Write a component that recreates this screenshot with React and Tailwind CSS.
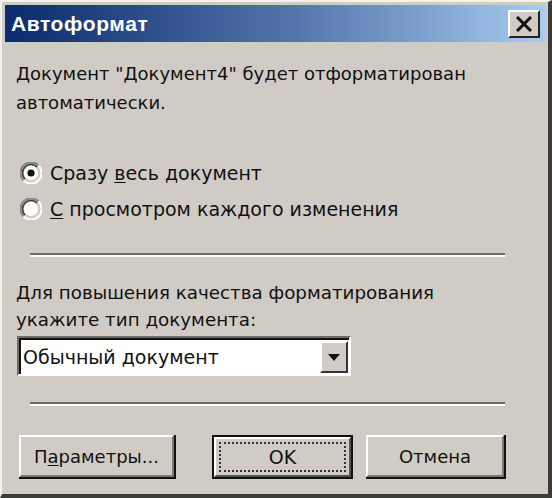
import React from 'react';

const font = { fontFamily: '"DejaVu Sans", "Liberation Sans", sans-serif' };

function Radio({ checked }) {
  return (
    <svg width="22" height="22" viewBox="0 0 22 22" className="shrink-0">
      <path d="M 3.5 18.5 A 10 10 0 0 1 18.5 3.5" fill="none" stroke="#8a8680" strokeWidth="2" />
      <path d="M 5 17 A 8 8 0 0 1 17 5" fill="none" stroke="#3a3a3a" strokeWidth="1.6" />
      <path d="M 18.5 3.5 A 10 10 0 0 1 3.5 18.5" fill="none" stroke="#ffffff" strokeWidth="2" />
      <circle cx="11" cy="11" r="7.2" fill="#ffffff" />
      {checked && <circle cx="11" cy="11" r="3.6" fill="#111111" />}
    </svg>
  );
}

function Separator() {
  return (
    <div className="ml-[25px] mr-[40px] flex shrink-0 flex-col">
      <div className="h-[2px] bg-[#6f6c68]" />
      <div className="h-[2px] bg-[#ffffff]" />
    </div>
  );
}

function Button({ children, isDefault, width }) {
  if (isDefault) {
    return (
      <div className={`h-[44px] shrink-0 border-2 border-[#111111] ${width}`}>
        <div className="h-full w-full border-t-2 border-l-2 border-r-2 border-b-2 border-t-[#ffffff] border-l-[#ffffff] border-r-[#555555] border-b-[#555555] bg-[#d0ccc5] p-[3px]">
          <div className="flex h-full w-full items-center justify-center border-2 border-dotted border-[#333333] text-[19px] text-[#111111]">
            {children}
          </div>
        </div>
      </div>
    );
  }
  return (
    <div className={`h-[44px] shrink-0 border-r-2 border-b-2 border-r-[#111111] border-b-[#111111] ${width}`}>
      <div className="flex h-full w-full items-center justify-center border-t-2 border-l-2 border-r-2 border-b-2 border-t-[#ffffff] border-l-[#ffffff] border-r-[#7b7873] border-b-[#7b7873] bg-[#d0ccc5] text-[18px] text-[#111111]">
        {children}
      </div>
    </div>
  );
}

export default function App() {
  return (
    <div className="h-[498px] w-[552px] overflow-hidden bg-[#d0ccc5]" style={font}>
      <div className="flex h-full w-full flex-col border-t-2 border-l-2 border-r-4 border-b-4 border-t-[#f4f2ee] border-l-[#f4f2ee] border-r-[#3d3b38] border-b-[#3d3b38] px-[3px] pt-[3px]">
        <div className="flex h-[37px] shrink-0 items-center justify-between bg-gradient-to-r from-[#0c2a6c] via-[#4e6fa6] to-[#a9cbef] pl-[6px] pr-[5px]">
          <span className="text-[21px] font-bold leading-none tracking-[0.6px] text-[#ffffff]" style={{ fontFamily: '"Liberation Sans", Arial, sans-serif' }}>Автоформат</span>
          <div className="flex h-[28px] w-[32px] items-center justify-center border-t-2 border-l-2 border-r-2 border-b-2 border-t-[#ffffff] border-l-[#ffffff] border-r-[#222222] border-b-[#222222] bg-[#d0ccc5]">
            <svg width="18" height="16" viewBox="0 0 18 16">
              <path d="M2 1 L16 15 M16 1 L2 15" stroke="#111111" strokeWidth="3" />
            </svg>
          </div>
        </div>

        <div className="shrink-0 pl-[11px] pt-[17px] text-[18px] leading-[29px] text-[#111111]">
          <p>Документ "Документ4" будет отформатирован</p>
          <p>автоматически.</p>
        </div>

        <div className="mt-[38px] flex shrink-0 flex-col pl-[15px] text-[19px] text-[#111111]">
          <div className="flex h-[36px] items-center gap-[8px]">
            <Radio checked />
            <span>Сразу <span className="underline underline-offset-2">в</span>есь документ</span>
          </div>
          <div className="flex h-[36px] items-center gap-[8px]">
            <Radio />
            <span><span className="underline underline-offset-2">С</span> просмотром каждого изменения</span>
          </div>
        </div>

        <div className="mt-[26px] shrink-0">
          <Separator />
        </div>

        <div className="shrink-0 pl-[11px] pt-[22px] text-[18.3px] leading-[27px] text-[#111111]">
          <p><span className="underline underline-offset-2">Д</span>ля повышения качества форматирования</p>
          <p>укажите тип документа:</p>
        </div>

        <div className="ml-[12px] mt-[3px] flex h-[40px] w-[334px] shrink-0 border-t-2 border-l-2 border-r-2 border-b-2 border-t-[#6f6c68] border-l-[#6f6c68] border-r-[#ffffff] border-b-[#ffffff]">
          <div className="flex h-full w-full items-center border-t-2 border-l-2 border-t-[#111111] border-l-[#111111] bg-[#ffffff] p-[1px]">
            <span className="flex-1 pl-[1px] text-[19px] text-[#111111]">Обычный документ</span>
            <div className="flex h-full w-[28px] items-center justify-center border-t-2 border-l-2 border-r-2 border-b-2 border-t-[#ffffff] border-l-[#ffffff] border-r-[#333333] border-b-[#333333] bg-[#d0ccc5]">
              <svg width="12" height="7" viewBox="0 0 12 7">
                <path d="M0 0 L12 0 L6 7 Z" fill="#111111" />
              </svg>
            </div>
          </div>
        </div>

        <div className="mt-[26px] shrink-0">
          <Separator />
        </div>

        <div className="mt-[29px] flex shrink-0 items-center pl-[14px]">
          <Button width="w-[157px]">
            <span>П<span className="underline underline-offset-2">а</span>раметры...</span>
          </Button>
          <div className="ml-[36px]">
            <Button isDefault width="w-[141px]">OK</Button>
          </div>
          <div className="ml-[13px]">
            <Button width="w-[140px]">Отмена</Button>
          </div>
        </div>
      </div>
    </div>
  );
}
